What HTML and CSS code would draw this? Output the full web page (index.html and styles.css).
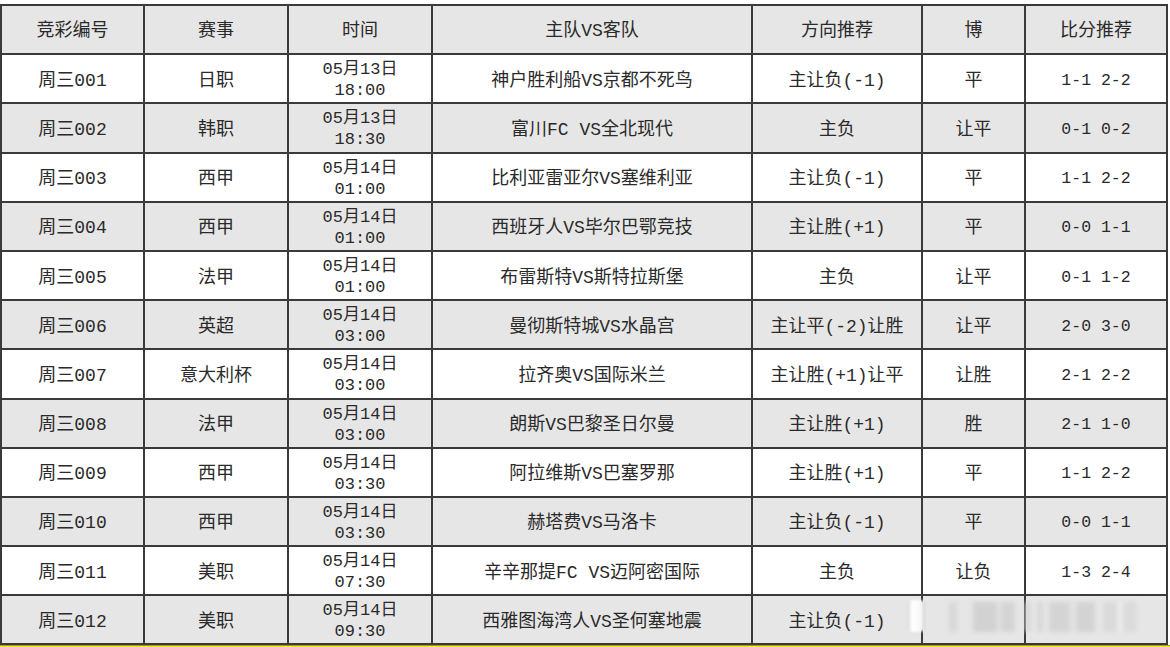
FILE: index.html
```html
<!DOCTYPE html>
<html lang="zh-CN">
<head>
<meta charset="utf-8">
<title>竞彩推荐</title>
<link rel="stylesheet" href="styles.css">
</head>
<body>
<div class="page">
  <div class="table">
    <div class="row head">
      <div class="cell">竞彩编号</div><div class="cell">赛事</div><div class="cell">时间</div><div class="cell">主队VS客队</div><div class="cell">方向推荐</div><div class="cell">博</div><div class="cell">比分推荐</div>
    </div>
    <div class="row">
      <div class="cell">周三001</div><div class="cell">日职</div><div class="cell time"><span>05月13日</span><span>18:00</span></div><div class="cell">神户胜利船VS京都不死鸟</div><div class="cell">主让负(-1)</div><div class="cell">平</div><div class="cell score">1-1 2-2</div>
    </div>
    <div class="row alt">
      <div class="cell">周三002</div><div class="cell">韩职</div><div class="cell time"><span>05月13日</span><span>18:30</span></div><div class="cell">富川FC VS全北现代</div><div class="cell">主负</div><div class="cell">让平</div><div class="cell score">0-1 0-2</div>
    </div>
    <div class="row">
      <div class="cell">周三003</div><div class="cell">西甲</div><div class="cell time"><span>05月14日</span><span>01:00</span></div><div class="cell">比利亚雷亚尔VS塞维利亚</div><div class="cell">主让负(-1)</div><div class="cell">平</div><div class="cell score">1-1 2-2</div>
    </div>
    <div class="row alt">
      <div class="cell">周三004</div><div class="cell">西甲</div><div class="cell time"><span>05月14日</span><span>01:00</span></div><div class="cell">西班牙人VS毕尔巴鄂竞技</div><div class="cell">主让胜(+1)</div><div class="cell">平</div><div class="cell score">0-0 1-1</div>
    </div>
    <div class="row">
      <div class="cell">周三005</div><div class="cell">法甲</div><div class="cell time"><span>05月14日</span><span>01:00</span></div><div class="cell">布雷斯特VS斯特拉斯堡</div><div class="cell">主负</div><div class="cell">让平</div><div class="cell score">0-1 1-2</div>
    </div>
    <div class="row alt">
      <div class="cell">周三006</div><div class="cell">英超</div><div class="cell time"><span>05月14日</span><span>03:00</span></div><div class="cell">曼彻斯特城VS水晶宫</div><div class="cell">主让平(-2)让胜</div><div class="cell">让平</div><div class="cell score">2-0 3-0</div>
    </div>
    <div class="row">
      <div class="cell">周三007</div><div class="cell">意大利杯</div><div class="cell time"><span>05月14日</span><span>03:00</span></div><div class="cell">拉齐奥VS国际米兰</div><div class="cell">主让胜(+1)让平</div><div class="cell">让胜</div><div class="cell score">2-1 2-2</div>
    </div>
    <div class="row alt">
      <div class="cell">周三008</div><div class="cell">法甲</div><div class="cell time"><span>05月14日</span><span>03:00</span></div><div class="cell">朗斯VS巴黎圣日尔曼</div><div class="cell">主让胜(+1)</div><div class="cell">胜</div><div class="cell score">2-1 1-0</div>
    </div>
    <div class="row">
      <div class="cell">周三009</div><div class="cell">西甲</div><div class="cell time"><span>05月14日</span><span>03:30</span></div><div class="cell">阿拉维斯VS巴塞罗那</div><div class="cell">主让胜(+1)</div><div class="cell">平</div><div class="cell score">1-1 2-2</div>
    </div>
    <div class="row alt">
      <div class="cell">周三010</div><div class="cell">西甲</div><div class="cell time"><span>05月14日</span><span>03:30</span></div><div class="cell">赫塔费VS马洛卡</div><div class="cell">主让负(-1)</div><div class="cell">平</div><div class="cell score">0-0 1-1</div>
    </div>
    <div class="row">
      <div class="cell">周三011</div><div class="cell">美职</div><div class="cell time"><span>05月14日</span><span>07:30</span></div><div class="cell">辛辛那提FC VS迈阿密国际</div><div class="cell">主负</div><div class="cell">让负</div><div class="cell score">1-3 2-4</div>
    </div>
    <div class="row alt">
      <div class="cell">周三012</div><div class="cell">美职</div><div class="cell time"><span>05月14日</span><span>09:30</span></div><div class="cell">西雅图海湾人VS圣何塞地震</div><div class="cell">主让负(-1)</div><div class="cell"></div><div class="cell score"></div>
    </div>
  </div>
  <div class="yellow"></div>
  <div class="watermark">
    <div class="wm-pill"></div>
    <div class="wm-bars"></div>
  </div>
</div>
</body>
</html>
```

FILE: styles.css
```css
html, body {
  margin: 0;
  padding: 0;
  background: #ffffff;
}
body {
  font-family: "Liberation Mono", "Noto Sans CJK SC", monospace;
  color: #2a2a2a;
  overflow: hidden;
}
.page {
  position: relative;
  width: 1170px;
  height: 647px;
  padding-top: 4px;
  box-sizing: border-box;
}
.table {
  display: grid;
  grid-template-columns: 141px 142px 142px 318px 168px 101px 140px;
  grid-auto-rows: 47.2px;
  gap: 2px;
  padding: 2px;
  width: 1168px;
  box-sizing: border-box;
  background: #3a3a3a;
}
.row {
  display: contents;
}
.cell {
  background: #ffffff;
  display: flex;
  flex-direction: column;
  align-items: center;
  justify-content: center;
  font-size: 18px;
  line-height: 20px;
  white-space: pre;
  padding-top: 4px;
  box-sizing: border-box;
}
.head .cell {
  padding-top: 2px;
}
.head .cell,
.alt .cell {
  background: #e7e6e6;
}
.time {
  font-size: 17px;
  line-height: 21px;
  padding-top: 3px;
}
.score {
  font-size: 16.5px;
}
.yellow {
  height: 6px;
  background: #f4f000;
  border-top: 1px solid #9a9a30;
}
.watermark {
  position: absolute;
  left: 905px;
  top: 598px;
  width: 238px;
  height: 38px;
}
.wm-pill {
  position: absolute;
  left: 2px;
  top: 2px;
  width: 18px;
  height: 32px;
  border-radius: 5px;
  background: linear-gradient(90deg, #d8d8d8 0%, #ffffff 30%, #f6f6f6 80%, #cfcfcf 100%);
  filter: blur(0.8px);
}
.wm-bars {
  position: absolute;
  left: 40px;
  top: 4px;
  width: 196px;
  height: 30px;
  filter: blur(2px);
  background:
    linear-gradient(90deg,
      transparent 0px, transparent 4px,
      #d6d6d6 4px, #d6d6d6 12px,
      transparent 12px, transparent 28px,
      #cfcfcf 28px, #cfcfcf 52px,
      #e2e2e2 52px, #e2e2e2 56px,
      #d2d2d2 56px, #d2d2d2 70px,
      transparent 70px, transparent 80px,
      #d8d8d8 80px, #d8d8d8 86px,
      transparent 86px, transparent 92px,
      #d6d6d6 92px, #d6d6d6 98px,
      transparent 98px, transparent 104px,
      #d2d2d2 104px, #d2d2d2 124px,
      #e0e0e0 124px, #e0e0e0 132px,
      #d0d0d0 132px, #d0d0d0 150px,
      transparent 150px, transparent 158px,
      #d8d8d8 158px, #d8d8d8 172px,
      #ececec 172px, #ececec 178px,
      #dadada 178px, #dadada 192px,
      transparent 192px);
  opacity: 0.85;
}
```
